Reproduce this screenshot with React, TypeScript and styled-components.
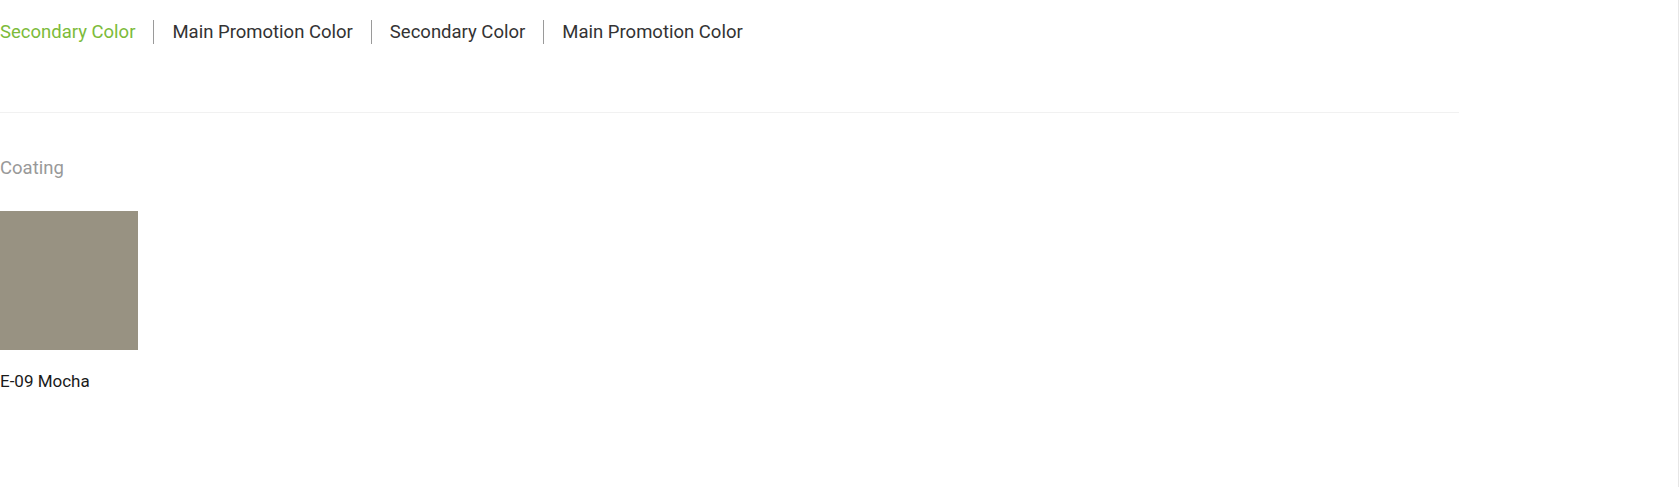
import * as React from "react";
import styled, { createGlobalStyle } from "styled-components";

const GlobalStyle = createGlobalStyle`
  html, body {
    margin: 0;
    padding: 0;
    background: #fff;
  }
  body {
    font-family: Roboto, "Liberation Sans", Arial, sans-serif;
    -webkit-font-smoothing: antialiased;
  }
`;

const Page = styled.div`
  box-sizing: border-box;
  width: 100%;
  min-height: 100vh;
  border-right: 1px solid #e6e6e6;
`;

const Content = styled.div`
  width: 1459px;
`;

const TabBar = styled.nav`
  display: flex;
  align-items: center;
  padding-top: 20px;
`;

const Tab = styled.div<{ $active?: boolean; $first?: boolean }>`
  font-size: 18.5px;
  line-height: 24px;
  padding: 0 18px;
  padding-left: ${(p) => (p.$first ? "0" : "18px")};
  border-left: ${(p) => (p.$first ? "none" : "1px solid #9a9a9a")};
  color: ${(p) => (p.$active ? "#7cbb3a" : "#333")};
  cursor: pointer;
  white-space: nowrap;
`;

const Rule = styled.div`
  margin-top: 68px;
  border-top: 1px solid #f1f1f1;
`;

const SectionTitle = styled.div`
  margin-top: 43px;
  font-size: 18.5px;
  line-height: 24px;
  color: #999;
`;

const SwatchList = styled.div`
  display: flex;
  gap: 24px;
  margin-top: 31px;
`;

const SwatchItem = styled.div`
  display: flex;
  flex-direction: column;
`;

const Swatch = styled.div<{ $color: string }>`
  width: 138px;
  height: 139px;
  background: ${(p) => p.$color};
`;

const SwatchLabel = styled.div`
  margin-top: 21px;
  font-size: 17px;
  line-height: 20px;
  color: #1a1a1a;
`;

const tabs = [
  "Secondary Color",
  "Main Promotion Color",
  "Secondary Color",
  "Main Promotion Color",
];

const swatches = [{ name: "E-09 Mocha", color: "#989282" }];

export default function App() {
  const [active, setActive] = React.useState(0);
  return (
    <>
      <GlobalStyle />
      <Page>
        <Content>
          <TabBar>
            {tabs.map((t, i) => (
              <Tab
                key={i}
                $first={i === 0}
                $active={i === active}
                onClick={() => setActive(i)}
              >
                {t}
              </Tab>
            ))}
          </TabBar>
          <Rule />
          <SectionTitle>Coating</SectionTitle>
          <SwatchList>
            {swatches.map((s) => (
              <SwatchItem key={s.name}>
                <Swatch $color={s.color} />
                <SwatchLabel>{s.name}</SwatchLabel>
              </SwatchItem>
            ))}
          </SwatchList>
        </Content>
      </Page>
    </>
  );
}
